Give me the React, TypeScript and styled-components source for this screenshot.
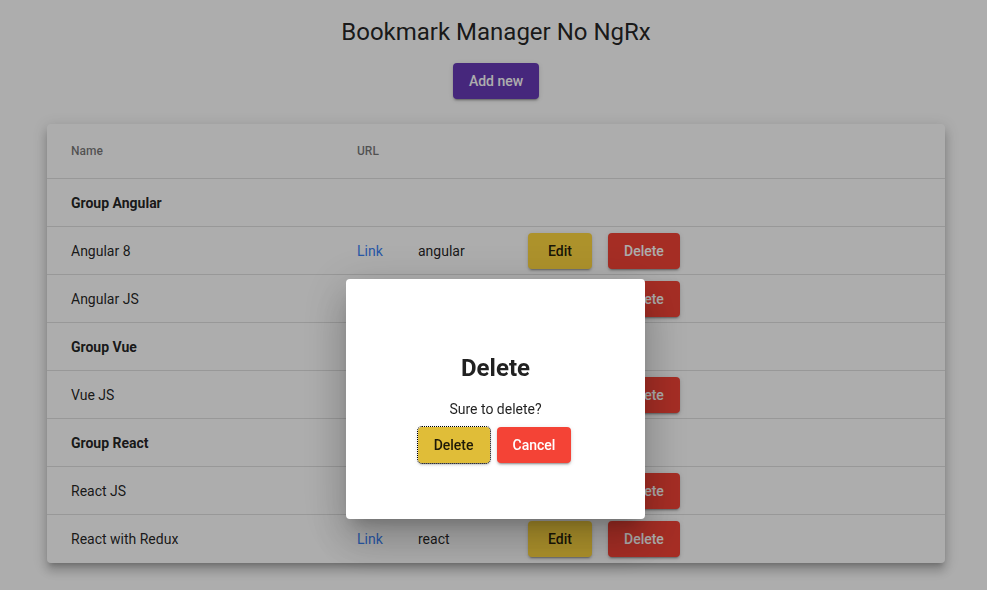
import React from "react";
import { styled, createGlobalStyle, css } from "styled-components";

// THEME (deeppurple-amber)

const Theme = {
  primary: "#673ab7",
  accent: "#ffd740",
  accentFocused: "#e0bd38",
  warn: "#f44336",
  text: "rgba(0, 0, 0, 0.87)",
  muted: "rgba(0, 0, 0, 0.54)",
  divider: "rgba(0, 0, 0, 0.12)",
  link: "#3b82f6",
};

const raisedShadow =
  "0 3px 1px -2px rgba(0,0,0,.2), 0 2px 2px 0 rgba(0,0,0,.14), 0 1px 5px 0 rgba(0,0,0,.12)";

const GlobalStyle = createGlobalStyle`
  * { box-sizing: border-box; }
  body {
    margin: 0;
    background: #fff;
    font-family: Roboto, "Helvetica Neue", sans-serif;
    color: ${Theme.text};
  }
`;

// STYLES SECTION

const Page = styled.div`
  display: flex;
  flex-direction: column;
  align-items: center;
  padding: 16px 42px 40px 47px;
`;

const Title = styled.h1`
  margin: 0;
  font-size: 24px;
  line-height: 32px;
  font-weight: 400;
  color: ${Theme.text};
`;

type Variant = "primary" | "accent" | "warn" | "accentFocused";

const Button = styled.button<{ $variant: Variant; $focused?: boolean }>`
  height: 36px;
  min-width: 64px;
  padding: 0 16px;
  border: none;
  border-radius: 4px;
  font-family: Roboto, sans-serif;
  font-size: 14px;
  font-weight: 500;
  line-height: 36px;
  box-shadow: ${raisedShadow};
  cursor: pointer;
  ${({ $variant }) =>
    $variant === "primary"
      ? css`background: ${Theme.primary}; color: #fff;`
      : $variant === "warn"
      ? css`background: ${Theme.warn}; color: #fff;`
      : $variant === "accentFocused"
      ? css`background: ${Theme.accentFocused}; color: ${Theme.text};`
      : css`background: ${Theme.accent}; color: ${Theme.text};`}
  ${({ $focused }) =>
    $focused &&
    css`
      outline: 1px dotted #000;
      outline-offset: 0;
    `}
`;

const AddButton = styled(Button)`
  margin-top: 15px;
`;

const Table = styled.div`
  align-self: stretch;
  margin-top: 25px;
  background: #fff;
  border-radius: 4px;
  box-shadow: 0 5px 5px -3px rgba(0,0,0,.2), 0 8px 10px 1px rgba(0,0,0,.14),
    0 3px 14px 2px rgba(0,0,0,.12);
`;

const Row = styled.div<{ $header?: boolean }>`
  display: grid;
  grid-template-columns: 310px 61px 110px 80px 1fr;
  align-items: center;
  height: ${({ $header }) => ($header ? "55px" : "48px")};
  border-bottom: 1px solid ${Theme.divider};
  font-size: ${({ $header }) => ($header ? "12px" : "14px")};
  font-weight: ${({ $header }) => ($header ? 500 : 400)};
  color: ${({ $header }) => ($header ? Theme.muted : Theme.text)};

  &:last-child {
    border-bottom: none;
  }
`;

const NameCell = styled.div<{ $group?: boolean }>`
  padding-left: 24px;
  font-weight: ${({ $group }) => ($group ? 700 : "inherit")};
`;

const Cell = styled.div``;

const Link = styled.a`
  color: ${Theme.link};
  text-decoration: none;
`;

const Backdrop = styled.div`
  position: fixed;
  inset: 0;
  background: rgba(0, 0, 0, 0.32);
  display: flex;
  justify-content: center;
  align-items: flex-start;
  padding: 279px 0 0 4px;
`;

const Dialog = styled.div`
  width: 299px;
  height: 240px;
  padding: 73px 24px 0;
  background: #fff;
  border-radius: 4px;
  box-shadow: 0 11px 15px -7px rgba(0,0,0,.2), 0 24px 38px 3px rgba(0,0,0,.14),
    0 9px 46px 8px rgba(0,0,0,.12);
  display: flex;
  flex-direction: column;
  align-items: center;
`;

const DialogTitle = styled.h2`
  margin: 0 0 15px;
  font-size: 24px;
  line-height: 32px;
  font-weight: 700;
  color: ${Theme.text};
`;

const DialogText = styled.p`
  margin: 0 0 8px;
  font-size: 14px;
  line-height: 20px;
`;

const DialogActions = styled.div`
  display: flex;
  gap: 7px;
  margin-left: -2px;
`;

// DATA SECTION

const groups = [
  {
    name: "Group Angular",
    items: [
      { name: "Angular 8", tag: "angular" },
      { name: "Angular JS", tag: "angular" },
    ],
  },
  { name: "Group Vue", items: [{ name: "Vue JS", tag: "vue" }] },
  {
    name: "Group React",
    items: [
      { name: "React JS", tag: "react" },
      { name: "React with Redux", tag: "react" },
    ],
  },
];

// RENDER SECTION

export default function App() {
  return (
    <>
      <GlobalStyle />
      <Page>
        <Title>Bookmark Manager No NgRx</Title>
        <AddButton $variant="primary">Add new</AddButton>
        <Table>
          <Row $header>
            <NameCell>Name</NameCell>
            <Cell>URL</Cell>
            <Cell />
            <Cell />
            <Cell />
          </Row>
          {groups.map((group) => (
            <React.Fragment key={group.name}>
              <Row>
                <NameCell $group>{group.name}</NameCell>
              </Row>
              {group.items.map((item) => (
                <Row key={item.name}>
                  <NameCell>{item.name}</NameCell>
                  <Cell>
                    <Link href="#">Link</Link>
                  </Cell>
                  <Cell>{item.tag}</Cell>
                  <Cell>
                    <Button $variant="accent">Edit</Button>
                  </Cell>
                  <Cell>
                    <Button $variant="warn">Delete</Button>
                  </Cell>
                </Row>
              ))}
            </React.Fragment>
          ))}
        </Table>
      </Page>
      <Backdrop>
        <Dialog>
          <DialogTitle>Delete</DialogTitle>
          <DialogText>Sure to delete?</DialogText>
          <DialogActions>
            <Button $variant="accentFocused" $focused>
              Delete
            </Button>
            <Button $variant="warn">Cancel</Button>
          </DialogActions>
        </Dialog>
      </Backdrop>
    </>
  );
}
